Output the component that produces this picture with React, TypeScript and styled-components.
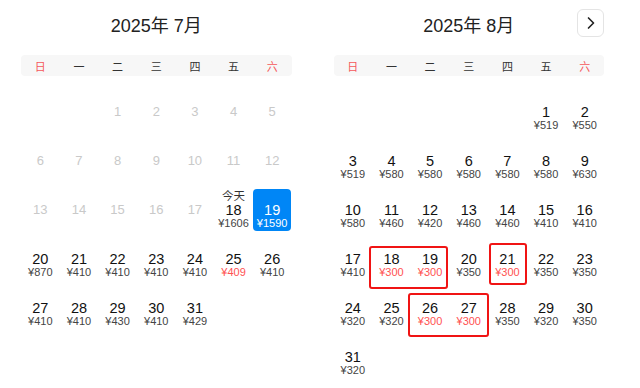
import React from 'react';
import styled, { createGlobalStyle } from 'styled-components';
import { ChevronRight } from 'lucide-react';

const GlobalStyle = createGlobalStyle`
	body {
		margin: 0;
		background: #fff;
		font-family: 'Liberation Sans', 'Noto Sans CJK SC', sans-serif;
		color: #222;
	}
`;

const Page = styled.div`
	display: flex;
	gap: 42px;
	padding: 0 36px 0 21px;
	width: 640px;
	box-sizing: border-box;
`;

const Month = styled.div`
	width: 271px;
`;

const Head = styled.div`
	display: grid;
	grid-template-columns: 1fr auto 1fr;
	align-items: center;
	height: 48px;
`;

const Title = styled.div`
	grid-column: 2;
	font-size: 18px;
	color: #222;
	white-space: nowrap;
`;

const NextBtn = styled.button`
	grid-column: 3;
	justify-self: end;
	width: 27px;
	height: 28px;
	margin-top: -2px;
	padding: 0;
	display: flex;
	align-items: center;
	justify-content: center;
	background: #fff;
	border: 1px solid #e4e4e4;
	border-radius: 6px;
	color: #222;
	cursor: pointer;
`;

const WeekBar = styled.div`
	display: grid;
	grid-template-columns: repeat(7, 1fr);
	margin-top: 7px;
	height: 21px;
	align-items: center;
	background: #f7f7f7;
	border-radius: 4px;
`;

const WeekDay = styled.span<{ weekend?: boolean }>`
	text-align: center;
	font-size: 11px;
	color: ${(p) => (p.weekend ? '#f5585b' : '#333')};
`;

const Grid = styled.div`
	position: relative;
	display: grid;
	grid-template-columns: repeat(7, 1fr);
	grid-auto-rows: 42px;
	row-gap: 7px;
	margin-top: 15px;
`;

const Cell = styled.div<{ selected?: boolean }>`
	display: flex;
	flex-direction: column;
	align-items: center;
	padding-top: 1px;
	box-sizing: border-box;
	border-radius: 4px;
	background: ${(p) => (p.selected ? '#0086f6' : 'transparent')};
	color: ${(p) => (p.selected ? '#fff' : '#111')};
`;

const Label = styled.div`
	height: 13px;
	line-height: 13px;
	font-size: 11.5px;
	color: #333;
`;

const Num = styled.div<{ disabled?: boolean }>`
	height: 14px;
	line-height: 14px;
	font-size: ${(p) => (p.disabled ? '13px' : '14.5px')};
	color: ${(p) => (p.disabled ? '#c9c9c9' : 'inherit')};
`;

const Price = styled.div<{ low?: boolean; selected?: boolean }>`
	height: 11px;
	line-height: 11px;
	margin-top: 1px;
	font-size: 11px;
	color: ${(p) => (p.selected ? '#fff' : p.low ? '#ff5252' : '#444')};
`;

const Mark = styled.div`
	position: absolute;
	border: 2px solid #f01414;
	border-radius: 3px;
	box-sizing: border-box;
	pointer-events: none;
`;

type Day = {
	d: number;
	price?: number;
	low?: boolean;
	disabled?: boolean;
	today?: boolean;
	selected?: boolean;
};

const WEEK = ['日', '一', '二', '三', '四', '五', '六'];

const julyPrices: Record<number, number> = {
	18: 1606, 19: 1590, 20: 870, 21: 410, 22: 410, 23: 410, 24: 410, 25: 409,
	26: 410, 27: 410, 28: 410, 29: 430, 30: 410, 31: 429,
};

const augPrices = [
	519, 550, 519, 580, 580, 580, 580, 580, 630, 580, 460, 420, 460, 460, 410, 410,
	410, 300, 300, 350, 300, 350, 350, 320, 320, 300, 300, 350, 320, 350, 320,
];

const july: Day[] = Array.from({ length: 31 }, (_, i) => {
	const d = i + 1;
	return {
		d,
		price: julyPrices[d],
		disabled: d < 18,
		today: d === 18,
		selected: d === 19,
		low: d === 25,
	};
});

const august: Day[] = augPrices.map((p, i) => ({ d: i + 1, price: p, low: p === 300 }));

interface MonthProps {
	title: string;
	offset: number;
	days: Day[];
	showNext?: boolean;
	marks?: { left: number; top: number; width: number; height: number }[];
}

const MonthView: React.FC<MonthProps> = ({ title, offset, days, showNext, marks }) => (
	<Month>
		<Head>
			<Title>{title}</Title>
			{showNext && (
				<NextBtn aria-label="next">
					<ChevronRight size={20} strokeWidth={2} />
				</NextBtn>
			)}
		</Head>
		<WeekBar>
			{WEEK.map((w, i) => (
				<WeekDay key={w} weekend={i === 0 || i === 6}>
					{w}
				</WeekDay>
			))}
		</WeekBar>
		<Grid>
			{Array.from({ length: offset }, (_, i) => (
				<div key={'e' + i} />
			))}
			{days.map((day) => (
				<Cell key={day.d} selected={day.selected}>
					<Label>{day.today ? '今天' : ''}</Label>
					<Num disabled={day.disabled}>{day.d}</Num>
					{day.price && !day.disabled && (
						<Price low={day.low} selected={day.selected}>
							¥{day.price}
						</Price>
					)}
				</Cell>
			))}
			{marks?.map((m, i) => (
				<Mark key={i} style={{ left: m.left, top: m.top, width: m.width, height: m.height }} />
			))}
		</Grid>
	</Month>
);

const App: React.FC = () => (
	<>
		<GlobalStyle />
		<Page>
			<MonthView title="2025年 7月" offset={2} days={july} />
			<MonthView
				title="2025年 8月"
				offset={5}
				days={august}
				showNext
				marks={[
					{ left: 35, top: 155, width: 79, height: 43 },
					{ left: 155, top: 152, width: 38, height: 42 },
					{ left: 74, top: 202, width: 81, height: 44 },
				]}
			/>
		</Page>
	</>
);

export default App;
